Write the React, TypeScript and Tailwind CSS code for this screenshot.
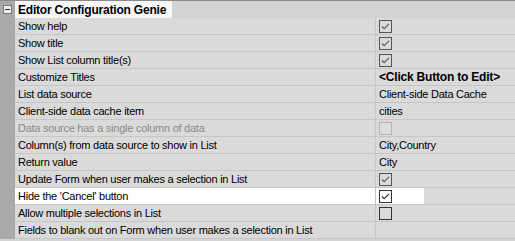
import React from "react";

type Row = {
  label: string;
  value?: string;
  check?: "on" | "off" | "disabled";
  bold?: boolean;
  disabled?: boolean;
  selected?: boolean;
};

const rows: Row[] = [
  { label: "Show help", check: "on" },
  { label: "Show title", check: "on" },
  { label: "Show List column title(s)", check: "on" },
  { label: "Customize Titles", value: "<Click Button to Edit>", bold: true },
  { label: "List data source", value: "Client-side Data Cache" },
  { label: "Client-side data cache item", value: "cities" },
  { label: "Data source has a single column of data", check: "disabled", disabled: true },
  { label: "Column(s) from data source to show in List", value: "City,Country" },
  { label: "Return value", value: "City" },
  { label: "Update Form when user makes a selection in List", check: "on" },
  { label: "Hide the 'Cancel' button", check: "on", selected: true },
  { label: "Allow multiple selections in List", check: "off" },
  { label: "Fields to blank out on Form when user makes a selection in List" },
];

function Check({ state, dark }: { state: "on" | "off" | "disabled"; dark?: boolean }) {
  const border = state === "disabled" ? "#b4b4b4" : dark ? "#333333" : "#555555";
  return (
    <svg width="13" height="13" viewBox="0 0 13 13" className="block">
      <rect x="0.5" y="0.5" width="12" height="12" fill={state === "disabled" ? "#dcdcdc" : "none"} stroke={border} />
      {state === "on" && (
        <path d="M3 6.5 L5.2 8.7 L10 3.9" fill="none" stroke={dark ? "#333" : "#5a5a5a"} strokeWidth="1.2" />
      )}
    </svg>
  );
}

export default function App() {
  return (
    <div
      className="w-[515px] h-[241px] bg-[#d4d4d4] overflow-hidden text-[11px] leading-none text-black tracking-[-0.25px]"
      style={{ fontFamily: "'Liberation Sans', Arial, sans-serif" }}
    >
      <div className="h-px bg-[#8a8a8a]" />
      {/* header */}
      <div className="flex h-[17px]">
        <div className="w-[15px] bg-[#a9a9a9] flex items-center justify-center">
          <div className="w-[9px] h-[9px] border border-[#7a7a7a] bg-[#ececec] flex items-center justify-center">
            <div className="w-[5px] h-px bg-[#333]" />
          </div>
        </div>
        <div className="flex-1 bg-[#d3d3d3] flex">
          <div className="w-[157px] bg-[#f7f7f7] flex items-center pl-[3px] font-bold text-[12px] tracking-[-0.2px]">
            Editor Configuration Genie
          </div>
        </div>
      </div>
      {rows.map((r, i) => (
        <div key={i} className="flex h-[17px]">
          <div className="w-[15px] bg-[#a9a9a9]" />
          <div
            className={`w-[361px] border-b border-r border-[#c6c6c6] flex items-center pl-[3px] whitespace-nowrap overflow-hidden ${
              r.selected ? "bg-white" : "bg-[#dadada]"
            } ${r.disabled ? "text-[#8a8a8a]" : "text-black"}`}
          >
            {r.label}
          </div>
          <div className="flex-1 border-b border-[#c6c6c6] bg-[#dadada] flex">
            <div
              className={`flex items-center pl-[3px] whitespace-nowrap ${
                r.selected ? "bg-white w-[48px]" : ""
              } ${r.bold ? "font-bold text-[12px] tracking-[-0.2px]" : ""}`}
            >
              {r.check ? <Check state={r.check} dark={r.selected || r.check === "off"} /> : r.value}
            </div>
          </div>
        </div>
      ))}
    </div>
  );
}
